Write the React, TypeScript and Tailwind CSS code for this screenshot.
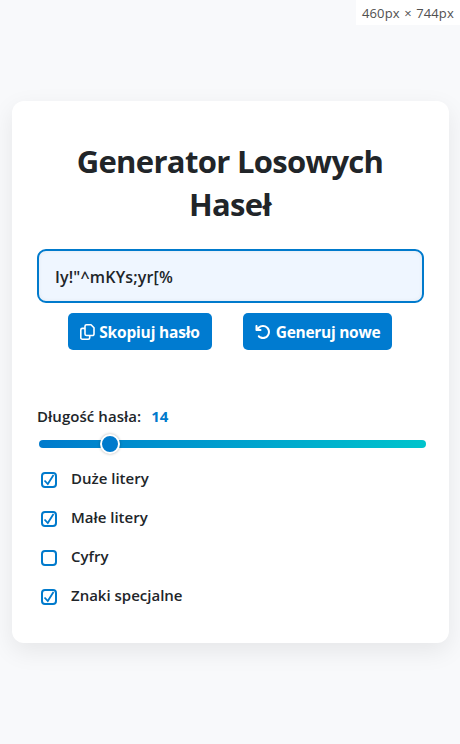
import { FaArrowRotateLeft } from "react-icons/fa6";

const options = [
  { label: "Duże litery", checked: true },
  { label: "Małe litery", checked: true },
  { label: "Cyfry", checked: false },
  { label: "Znaki specjalne", checked: true },
];

function CopyIcon() {
  return (
    <svg viewBox="0 0 15 16" className="h-4 w-[15px] shrink-0" fill="none" stroke="currentColor" strokeWidth="1.6" strokeLinejoin="round">
      <path d="M6.5 .8H11L14 3.8V10a1.5 1.5 0 0 1-1.5 1.5h-6A1.5 1.5 0 0 1 5 10V2.3A1.5 1.5 0 0 1 6.5 .8Z" />
      <path d="M5 4.4H2.3A1.5 1.5 0 0 0 .8 5.9v7.8a1.5 1.5 0 0 0 1.5 1.5h5.9a1.5 1.5 0 0 0 1.5-1.5v-2.2" />
    </svg>
  );
}

export default function App() {
  return (
    <div className="relative flex h-[744px] w-[460px] flex-col bg-[#f8f9fb] px-3 pt-[101px] font-['Open_Sans',sans-serif] text-[#212529]">
      <div className="absolute top-0 right-0 h-[25px] w-[104px] bg-white pl-[6px] text-[13px] leading-[26px] tracking-[0.12px] whitespace-nowrap text-[#505050] [word-spacing:1px]">460px × 744px</div>
      <main className="h-[542px] w-[437px] rounded-xl bg-white px-[25px] pt-[39px] shadow-[0_8px_24px_rgba(0,0,0,0.08)]">
        <h1 className="pr-px text-center text-[31px] leading-[43px] font-bold tracking-[-0.68px]">Generator Losowych<br />Haseł</h1>
        <div className="mt-[23px] flex h-[54px] items-center rounded-[9px] border-2 border-[#007acc] bg-[#eff6ff] px-4 pt-[2px] text-[16px] font-semibold tracking-[0.17px] shadow-[inset_0_0_4px_rgba(0,0,0,0.06)]">Iy!"^mKYs;yr[%</div>
        <div className="mt-[10px] flex gap-[31px] pl-[31px] text-[15.5px] font-bold text-white">
          <button className="flex h-[37px] w-[144px] items-center justify-center gap-1 rounded-[5px] bg-[#007bd0]"><CopyIcon /><span className="pt-[2px] tracking-[-0.17px]">Skopiuj hasło</span></button>
          <button className="flex h-[37px] w-[149px] items-center justify-center gap-[5px] rounded-[5px] bg-[#007bd0]"><FaArrowRotateLeft className="size-4" /><span className="pt-[2px] tracking-[-0.28px]">Generuj nowe</span></button>
        </div>
        <div className="mt-[54px] flex h-6 items-center text-[15px] font-semibold tracking-[0.06px]">Długość hasła:<span className="ml-[10px] font-bold text-[#007acc]">14</span></div>
        <div className="mt-[6px] ml-[2px] flex h-5 w-[387px] items-center">
          <div className="flex h-2 w-full items-center rounded bg-linear-to-r from-[#007acc] to-[#00c4cc] pl-[61px]"><span className="size-5 rounded-full border-2 border-white bg-[#007acc] shadow-[0_0_3px_rgba(0,0,0,0.3)]" /></div>
        </div>
        <div className="mt-[6px]">
          {options.map((o) => (
            <label key={o.label} className="flex h-[39px] items-center gap-[14px] pl-1 text-[15px] font-semibold">
              <span className="flex size-4 items-center justify-center rounded-[4px] border-2 border-[#007acc]">{o.checked && <svg viewBox="0 0 12 12" className="size-3 shrink-0" fill="none" stroke="#007acc" strokeWidth="1.8"><path d="M1.5 6.5L4.8 10L10.5 1" /></svg>}</span><span className="-mt-[2px]">{o.label}</span>
            </label>
          ))}
        </div>
      </main>
    </div>
  );
}
